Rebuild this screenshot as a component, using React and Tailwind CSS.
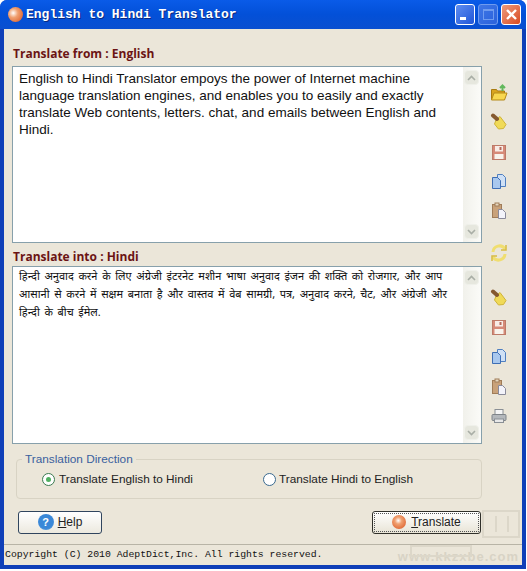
import React from "react";

const Folder = () => (
  <svg width="18" height="18" viewBox="0 0 18 18">
    <path d="M1.5 5.5h5l1 1.5h7v8.500h-13z" fill="#d9a520" stroke="#a87a10" />
    <path d="M1.500 16l2.500-7h13l-2.500 7z" fill="#f8d850" stroke="#b58a18" />
    <path d="M12.500 7V2M10 4l2.500-2.500L15 4" stroke="#62b85c" strokeWidth="2" fill="none" />
  </svg>
);

const Broom = () => (
  <svg width="18" height="18" viewBox="0 0 18 18">
    <path d="M7 7L11 3.500 17 11.500 14.500 15.500 9.500 16 5.500 11z" fill="#f0da58" stroke="#d0b438" transform="translate(-1 0)" />
    <path d="M3 2.500l4 3.500" stroke="#85592f" strokeWidth="4" strokeLinecap="round" />
  </svg>
);

const Floppy = () => (
  <svg width="16" height="16" viewBox="0 0 16 16">
    <rect x="1.500" y="1.500" width="13" height="14" fill="#d68a78" stroke="#bd7a68" />
    <rect x="4" y="2" width="8" height="5.500" fill="#f8ece6" />
    <rect x="3.500" y="10" width="9" height="5" fill="#f8f3ec" />
    <rect x="8.500" y="3" width="2" height="3" fill="#b56a5c" />
  </svg>
);

const Copy = () => (
  <svg width="16" height="17" viewBox="0 0 16 17">
    <path d="M6.500 1.500h5l3 3v9h-8z" fill="#cfe0f5" stroke="#4f7fc0" />
    <path d="M1.500 4.500h5l3 3v8h-8z" fill="#a9c8ee" stroke="#3f6fb5" />
  </svg>
);

const Paste = () => (
  <svg width="16" height="17" viewBox="0 0 16 17">
    <rect x="1.500" y="2.500" width="9" height="13" fill="#c9a27a" stroke="#a07c58" />
    <rect x="4" y="1" width="4" height="3" fill="#e6d8c0" stroke="#a07c58" />
    <path d="M7.500 7.500h4l3 3v6h-7z" fill="#f3f3fa" stroke="#8a8a9a" />
  </svg>
);

const Refresh = () => (
  <svg width="18" height="20" viewBox="0 0 18 20" fill="none" stroke="#f0de70" strokeWidth="3">
    <path d="M3 9a6.500 6.500 0 0 1 12-3" />
    <path d="M15 11a6.500 6.500 0 0 1-12 3" />
    <path d="M16 2v5h-5" strokeWidth="1.500" stroke="#d8bc40" />
    <path d="M2 18v-5h5" strokeWidth="1.500" stroke="#d8bc40" />
  </svg>
);

const Printer = () => (
  <svg width="16" height="16" viewBox="0 0 16 16">
    <rect x="4" y="1.500" width="8" height="5" fill="#f5f5f5" stroke="#8a8f95" />
    <rect x="1" y="6.500" width="14" height="6" rx="1" fill="#b4b8bc" stroke="#7f8489" />
    <rect x="3.500" y="11" width="9" height="3.500" fill="#e8e8e8" stroke="#8a8f95" />
  </svg>
);

const Arrow = ({ up }) => (
  <div className="flex h-[15px] w-[15px] items-center justify-center rounded-sm border border-[#eff0ea] bg-[#e6e7de]">
    <svg width="9" height="6" viewBox="0 0 9 6" fill="none" stroke="#a9aea6" strokeWidth="1.600">
      <path d={up ? "M1 5l3.500-3.500L8 5" : "M1 1l3.500 3.500L8 1"} />
    </svg>
  </div>
);

const TextPanel = ({ className, children }) => (
  <div className={`flex border border-[#87a0ab] bg-white ${className}`}>
    <div className="min-w-0 flex-1">{children}</div>
    <div className="flex w-[18px] flex-col justify-between bg-gradient-to-r from-[#f1f1eb] to-[#fbfbf8] px-px py-[3px]">
      <Arrow up />
      <Arrow />
    </div>
  </div>
);

const Label = ({ children }) => (
  <div className="h-[18px] pl-[1px] font-['Open_Sans',sans-serif] text-[12px] font-bold leading-[18px] text-[#6b1414]">
    {children}
  </div>
);

const Tool = ({ children, className }) => (
  <div className={`flex h-[29.5px] items-center justify-center ${className || ""}`}>{children}</div>
);

const App = () => {
  return (
    <div className="relative h-[571px] w-[527px] overflow-hidden bg-white font-['Liberation_Sans',sans-serif]">
      <div className="flex h-[569px] w-[526px] flex-col overflow-hidden rounded-t-[7px] bg-[#0f3fb8]">
        {/* title bar */}
        <div className="flex h-[29px] shrink-0 items-center bg-gradient-to-b from-[#0a5be8] via-[#0350d8] to-[#0a4fd0] pl-[8px] pr-[5px]">
          <span className="h-[15px] w-[15px] rounded-full bg-[radial-gradient(circle_at_35%_40%,#ffffff_0%,#f0a070_35%,#d8501c_100%)]" />
          <span className="ml-[3px] font-['Liberation_Mono',monospace] text-[13px] font-bold text-white [text-shadow:1px_1px_0_#0a2a80]">
            English to Hindi Translator
          </span>
          <div className="ml-auto flex gap-[3px]">
            <div className="flex h-[21px] w-[20px] items-end rounded-[3px] border border-white bg-gradient-to-br from-[#5f8df0] to-[#1f55d8] p-[4px]">
              <span className="h-[3px] w-[6px] bg-white" />
            </div>
            <div className="flex h-[21px] w-[20px] items-center justify-center rounded-[3px] border border-[#6f9bef] bg-gradient-to-br from-[#3f76e6] to-[#2a62dc]">
              <span className="h-[11px] w-[11px] border border-t-2 border-[#6f9bef]" />
            </div>
            <div className="flex h-[21px] w-[20px] items-center justify-center rounded-[3px] border border-white bg-gradient-to-br from-[#ec9a7c] to-[#d8481c] text-white">
              <svg width="13" height="13" viewBox="0 0 13 13" stroke="white" strokeWidth="2.400">
                <path d="M2 2l9 9M11 2l-9 9" />
              </svg>
            </div>
          </div>
        </div>

        {/* window body */}
        <div className="mx-[4px] flex min-h-0 flex-1 flex-col bg-[#ebe6d9]">
          <div className="flex flex-1 pl-[8px]">
            <div className="w-[470px] pt-[16px]">
              <div className="mb-[3px]">
                <Label>Translate from : English</Label>
              </div>
              <TextPanel className="h-[177px]">
                <p className="px-[6px] pt-[3px] text-[13.5px] leading-[17px] text-[#111]">
                  English to Hindi Translator empoys the power of Internet machine language translation engines, and
                  enables you to easily and exactly translate Web contents, letters. chat, and emails between English
                  and Hindi.
                </p>
              </TextPanel>
              <div className="pt-[5px]">
                <Label>Translate into : Hindi</Label>
              </div>
              <TextPanel className="h-[178px]">
                <div className="whitespace-nowrap px-[6px] font-['Noto_Sans','Liberation_Sans',sans-serif] text-[11px] leading-[18px] text-[#111] [word-spacing:1.8px]">
                  <div>हिन्दी अनुवाद करने के लिए अंग्रेजी इंटरनेट मशीन भाषा अनुवाद इंजन की शक्ति को रोजगार, और आप</div>
                  <div>आसानी से करने में सक्षम बनाता है और वास्तव में वेब सामग्री, पत्र, अनुवाद करने, चैट, और अंग्रेजी और</div>
                  <div>हिन्दी के बीच ईमेल.</div>
                </div>
              </TextPanel>
            </div>
            <div className="flex flex-1 flex-col pr-[6px] pt-[49px]">
              <Tool>
                <Folder />
              </Tool>
              <Tool>
                <Broom />
              </Tool>
              <Tool>
                <Floppy />
              </Tool>
              <Tool>
                <Copy />
              </Tool>
              <Tool>
                <Paste />
              </Tool>
              <Tool className="mt-[13px]">
                <Refresh />
              </Tool>
              <Tool className="mt-[15px]">
                <Broom />
              </Tool>
              <Tool>
                <Floppy />
              </Tool>
              <Tool>
                <Copy />
              </Tool>
              <Tool>
                <Paste />
              </Tool>
              <Tool>
                <Printer />
              </Tool>
            </div>
          </div>

          {/* direction group */}
          <div className="relative mb-[11px] ml-[12px] mr-[40px] h-[40px] rounded-[4px] border border-[#d8d3c4]">
            <span className="absolute -top-[9px] left-[5px] bg-[#ebe6d9] px-[3px] text-[11.800px] leading-[16px] text-[#3a5f9e]">
              Translation Direction
            </span>
            <div className="flex h-full items-center pl-[25px] pt-[1px] text-[11.800px] text-[#222]">
              <span className="flex h-[13px] w-[13px] items-center justify-center rounded-full border border-[#3a7a50] bg-white">
                <span className="h-[5px] w-[5px] rounded-full bg-[#4fb060]" />
              </span>
              <span className="ml-[4px] w-[204px]">Translate English to Hindi</span>
              <span className="h-[13px] w-[13px] rounded-full border border-[#3a6a90] bg-white" />
              <span className="ml-[3px]">Translate Hindi to English</span>
            </div>
          </div>

          {/* buttons */}
          <div className="mb-[10px] flex h-[24px] items-center justify-between pl-[14px] pr-[41px]">
            <button className="flex h-[23px] w-[84px] items-center justify-center gap-[4px] rounded-[3px] border border-[#30455e] bg-gradient-to-b from-white to-[#ece9df] text-[12px] text-[#222]">
              <span className="flex h-[16px] w-[16px] items-center justify-center rounded-full bg-[radial-gradient(circle_at_50%_45%,#3a88d8_0%,#3a88d8_60%,#7fb0de_100%)] text-[11px] font-bold text-white">
                ?
              </span>
              <span>
                <u>H</u>elp
              </span>
            </button>
            <button className="flex h-[23px] w-[109px] items-center justify-center gap-[5px] rounded-[3px] border border-[#30302a] bg-gradient-to-b from-white to-[#e8e4d6] text-[12px] text-[#222] outline-1 -outline-offset-3 outline-dotted outline-[#555]">
              <span className="h-[14px] w-[14px] rounded-full bg-[radial-gradient(circle_at_45%_40%,#ffffff_0%,#f0a070_30%,#d8501c_100%)]" />
              <span>
                <u>T</u>ranslate
              </span>
            </button>
          </div>

          {/* status bar */}
          <div className="relative flex h-[21px] shrink-0 items-center border-t border-[#b8b4a6] pl-[1px] font-['Liberation_Mono',monospace] text-[9.800px] text-[#111]">
            Copyright (C) 2010 AdeptDict,Inc. All rights reserved.
            <span className="absolute bottom-[-1px] right-[3px] font-['Liberation_Sans',sans-serif] text-[13px] font-bold tracking-[1px] text-[#d8d3c5]">
              www.kkzxbe.com
            </span>
          </div>
        </div>
        <div className="h-[4px] shrink-0" />
      </div>

      {/* faint site watermark over the corner */}
      <svg
        className="pointer-events-none absolute left-[408px] top-[505px]"
        width="119"
        height="52"
        viewBox="0 0 119 52"
        fill="none"
        stroke="#dcd7c9"
        strokeWidth="2"
      >
        <path d="M75 6h36v26H75zM88 11v16M100 11v16M3 41h60v10H3z" />
      </svg>
    </div>
  );
};

export default App;
